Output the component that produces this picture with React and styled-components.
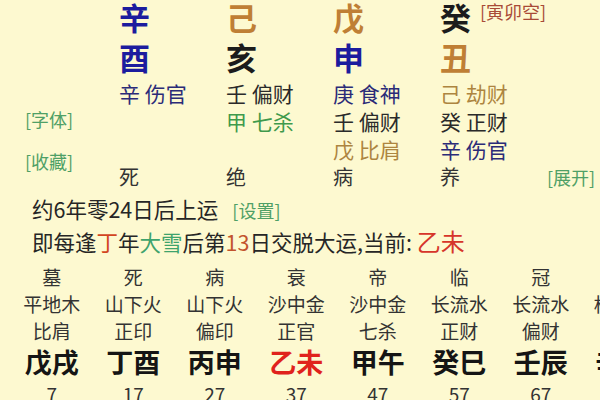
import React from "react";
import styled, { createGlobalStyle } from "styled-components";

const GlobalStyle = createGlobalStyle`
  html, body { margin: 0; padding: 0; background: #fdf9d0; }
  body { font-family: "Noto Sans CJK SC", "Noto Sans", sans-serif; }
`;

const C = {
  blue: "#1c1c9e",
  navy: "#2b2b78",
  earth: "#bf7f35",
  earthSoft: "#ad8540",
  ink: "#1c1c1c",
  dark: "#2a2a2a",
  green: "#3f9a4c",
  label: "#4fa066",
  note: "#a84a36",
};

const Page = styled.div`
  width: 600px;
  height: 400px;
  overflow: hidden;
  background: #fdf9d0;
  color: #333;
`;

const Top = styled.section`
  display: flex;
  height: 191px;
`;

const Side = styled.div`
  width: 119px;
  flex-shrink: 0;
  box-sizing: border-box;
  padding: 110px 0 0 25px;
  display: flex;
  flex-direction: column;
  gap: 24px;
`;

const Tag = styled.span`
  font-size: 18px;
  line-height: 18px;
  color: ${(p) => p.$color || C.label};
  white-space: nowrap;
`;

const Pillar = styled.div`
  width: 107px;
  flex-shrink: 0;
  display: flex;
  flex-direction: column;
`;

const StemRow = styled.div`
  display: flex;
  align-items: flex-start;
  gap: 9px;
  height: 34px;
`;

const Big = styled.span`
  font-size: 31px;
  font-weight: 700;
  line-height: ${(p) => p.$lh}px;
  color: ${(p) => p.$color};
`;

const Note = styled.span`
  font-size: 18px;
  line-height: 22px;
  color: ${C.note};
  white-space: nowrap;
`;

const HiddenList = styled.div`
  height: 84px;
  display: flex;
  flex-direction: column;
`;

const Hidden = styled.div`
  font-size: 21px;
  line-height: 28px;
  color: ${(p) => p.$color};
  white-space: nowrap;
`;

const Phase = styled.div`
  font-size: 20px;
  line-height: 28px;
  color: #333;
`;

const EndCol = styled.div`
  flex: 1;
  display: flex;
  flex-direction: column;
  justify-content: flex-end;
  align-items: flex-end;
  padding-right: 10px;
`;

const EndTag = styled(Tag)`
  line-height: 28px;
`;

const Info = styled.section`
  padding: 2px 0 0 32px;
`;

const Line = styled.div`
  font-size: 21.5px;
  line-height: 32px;
  color: #262626;
  white-space: nowrap;
`;

const Hl = styled.span`
  color: ${(p) => p.$color};
  font-size: ${(p) => p.$size || "inherit"};
`;

const SetTag = styled(Tag)`
  margin-left: 14px;
`;

const Luck = styled.section`
  display: flex;
  padding: 5px 0 0 11px;
`;

const LuckCol = styled.div`
  width: 81.5px;
  flex-shrink: 0;
  display: flex;
  flex-direction: column;
  align-items: center;
  white-space: nowrap;
`;

const Small = styled.div`
  font-size: 19px;
  line-height: 27px;
  color: #333;
`;

const GanZhi = styled.div`
  font-size: 27px;
  font-weight: 700;
  line-height: 36px;
  color: ${(p) => (p.$current ? "#e0221c" : "#151515")};
`;

const Age = styled.div`
  font-size: 19px;
  line-height: 28px;
  color: #333;
`;

const pillars = [
  {
    stem: "辛", stemColor: C.blue, branch: "酉", branchColor: C.blue,
    hidden: [{ t: "辛 伤官", c: C.navy }], phase: "死",
  },
  {
    stem: "己", stemColor: C.earth, branch: "亥", branchColor: C.ink,
    hidden: [{ t: "壬 偏财", c: C.dark }, { t: "甲 七杀", c: C.green }], phase: "绝",
  },
  {
    stem: "戊", stemColor: C.earth, branch: "申", branchColor: C.blue,
    hidden: [{ t: "庚 食神", c: C.navy }, { t: "壬 偏财", c: C.dark }, { t: "戊 比肩", c: C.earthSoft }],
    phase: "病",
  },
  {
    stem: "癸", stemColor: C.ink, note: "[寅卯空]", branch: "丑", branchColor: C.earth,
    hidden: [{ t: "己 劫财", c: C.earthSoft }, { t: "癸 正财", c: C.dark }, { t: "辛 伤官", c: C.navy }],
    phase: "养",
  },
];

const luck = [
  ["墓", "平地木", "比肩", "戊戌", "7"],
  ["死", "山下火", "正印", "丁酉", "17"],
  ["病", "山下火", "偏印", "丙申", "27"],
  ["衰", "沙中金", "正官", "乙未", "37", true],
  ["帝", "沙中金", "七杀", "甲午", "47"],
  ["临", "长流水", "正财", "癸巳", "57"],
  ["冠", "长流水", "偏财", "壬辰", "67"],
  ["浴", "松柏木", "伤官", "辛卯", "77"],
];

export default function App() {
  return (
    <Page>
      <GlobalStyle />
      <Top>
        <Side>
          <Tag>[字体]</Tag>
          <Tag>[收藏]</Tag>
        </Side>
        {pillars.map((p, i) => (
          <Pillar key={i}>
            <StemRow>
              <Big $lh={34} $color={p.stemColor}>{p.stem}</Big>
              {p.note && <Note>{p.note}</Note>}
            </StemRow>
            <Big $lh={45} $color={p.branchColor}>{p.branch}</Big>
            <HiddenList>
              {p.hidden.map((h, j) => (
                <Hidden key={j} $color={h.c}>{h.t}</Hidden>
              ))}
            </HiddenList>
            <Phase>{p.phase}</Phase>
          </Pillar>
        ))}
        <EndCol>
          <EndTag>[展开]</EndTag>
        </EndCol>
      </Top>
      <Info>
        <Line>
          约6年零24日后上运<SetTag>[设置]</SetTag>
        </Line>
        <Line>
          即每逢<Hl $color="#d2451f">丁</Hl>年<Hl $color="#3ea36c">大雪</Hl>后第
          <Hl $color="#c2532c">13</Hl>日交脱大运,当前: <Hl $color="#d6352a" $size="24px">乙未</Hl>
        </Line>
      </Info>
      <Luck>
        {luck.map(([ph, ny, ss, gz, age, cur], i) => (
          <LuckCol key={i}>
            <Small>{ph}</Small>
            <Small>{ny}</Small>
            <Small>{ss}</Small>
            <GanZhi $current={cur}>{gz}</GanZhi>
            <Age>{age}</Age>
          </LuckCol>
        ))}
      </Luck>
    </Page>
  );
}
